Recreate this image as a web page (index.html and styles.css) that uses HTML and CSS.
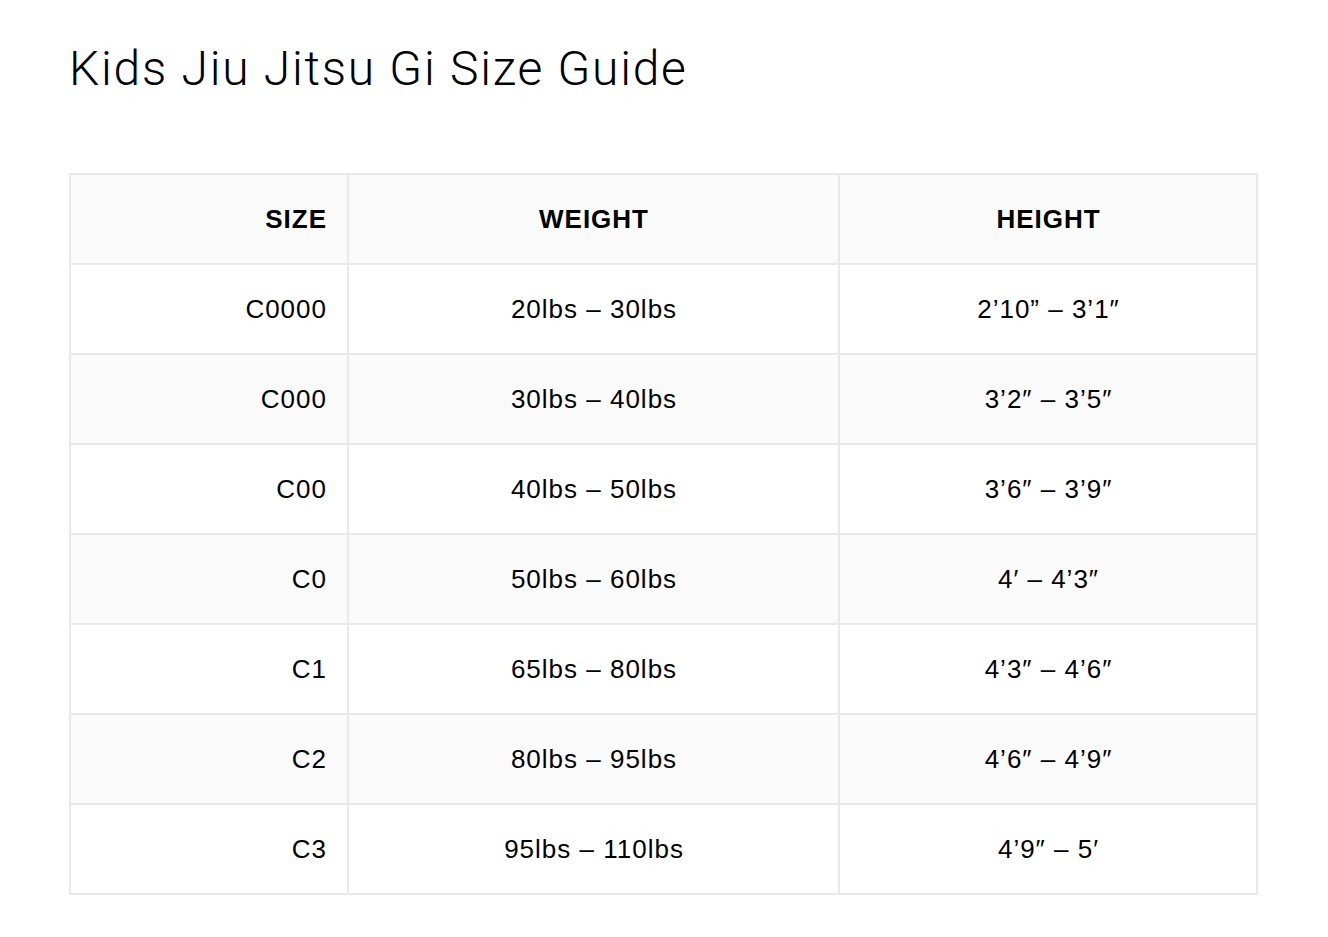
FILE: index.html
```html
<!DOCTYPE html>
<html>
<head>
<meta charset="utf-8">
<link rel="stylesheet" href="styles.css">
</head>
<body>
<main class="page">
  <h1 class="title">Kids Jiu Jitsu Gi Size Guide</h1>
  <table class="size-table">
    <thead>
      <tr><th class="c-size">SIZE</th><th class="c-weight">WEIGHT</th><th class="c-height">HEIGHT</th></tr>
    </thead>
    <tbody>
      <tr><td class="c-size">C0000</td><td class="c-weight">20lbs – 30lbs</td><td class="c-height">2’10” – 3’1″</td></tr>
      <tr><td class="c-size">C000</td><td class="c-weight">30lbs – 40lbs</td><td class="c-height">3’2″ – 3’5″</td></tr>
      <tr><td class="c-size">C00</td><td class="c-weight">40lbs – 50lbs</td><td class="c-height">3’6″ – 3’9″</td></tr>
      <tr><td class="c-size">C0</td><td class="c-weight">50lbs – 60lbs</td><td class="c-height">4′ – 4’3″</td></tr>
      <tr><td class="c-size">C1</td><td class="c-weight">65lbs – 80lbs</td><td class="c-height">4’3″ – 4’6″</td></tr>
      <tr><td class="c-size">C2</td><td class="c-weight">80lbs – 95lbs</td><td class="c-height">4’6″ – 4’9″</td></tr>
      <tr><td class="c-size">C3</td><td class="c-weight">95lbs – 110lbs</td><td class="c-height">4’9″ – 5′</td></tr>
    </tbody>
  </table>
</main>
</body>
</html>
```

FILE: styles.css
```css
html, body {
  margin: 0;
  padding: 0;
  background: #ffffff;
}
.page {
  padding: 39px 0 0 69px;
  font-family: "Liberation Sans", Arial, sans-serif;
  color: #000;
}
.title {
  margin: 0;
  font-family: Roboto, "Liberation Sans", sans-serif;
  font-weight: 300;
  font-size: 48px;
  line-height: 60px;
  letter-spacing: 1.75px;
}
.size-table {
  margin-top: 74px;
  width: 1189px;
  border-collapse: collapse;
  table-layout: fixed;
  font-size: 26px;
  letter-spacing: 1px;
}
.size-table th,
.size-table td {
  border: 2px solid #e9e9e9;
  height: 88px;
  padding: 0 20px 0 21px;
  vertical-align: middle;
}
.size-table th {
  font-weight: 700;
  background: #fafafa;
}
.size-table tbody tr:nth-child(even) td {
  background: #fafafa;
}
.c-size { width: 235px; text-align: right; }
.c-weight { width: 448px; text-align: center; }
.c-height { text-align: center; }
```
